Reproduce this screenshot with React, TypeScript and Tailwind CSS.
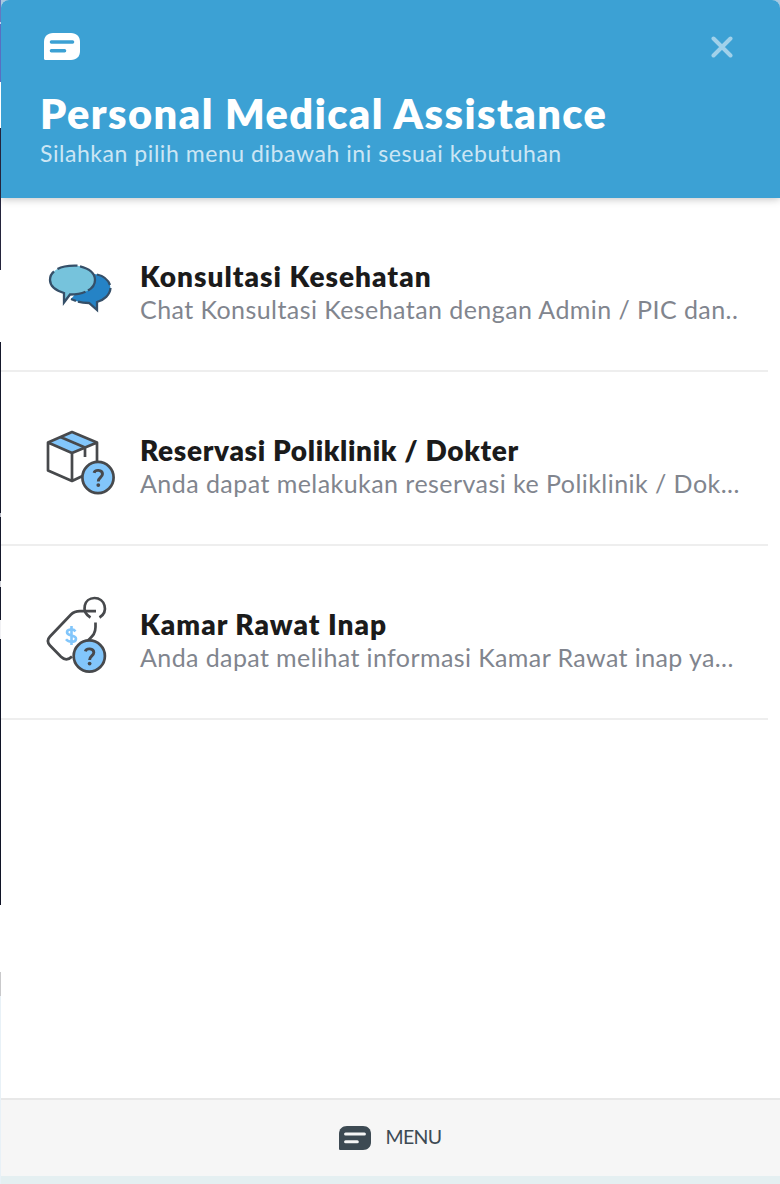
import type { ReactNode } from "react"

type MenuEntry = {
  title: string
  titleClass: string
  description: string
  descriptionClass: string
  icon: ReactNode
}

function MessageIcon({ className }: { className: string }) {
  return (
    <svg viewBox="0 0 36 27" className={className} fill="none" aria-hidden="true">
      <path
        d="M9 0H27C32.5 0 36 3.5 36 9V18C36 23.5 32.5 27 27 27H1.5C.6 27 0 26.4 0 25.5V9C0 3.5 3.5 0 9 0Z"
        fill="currentColor"
      />
      <path d="M7.4 9H28.6M7.4 17.8H20.6" className="stroke-(--line)" strokeWidth="3.4" strokeLinecap="round" />
    </svg>
  )
}

function QuestionMark({ cx, cy }: { cx: number; cy: number }) {
  return (
    <g transform={`translate(${cx} ${cy})`}>
      <circle r="15.6" fill="#82c6fb" stroke="#47494c" strokeWidth="2.7" />
      <path
        d="M-3.9-4.6C-3.2-8 4.5-8.2 4.5-3.4C4.5-.2.3.1.3 3.9"
        stroke="#47494c"
        strokeWidth="2.9"
        fill="none"
      />
      <circle cx=".3" cy="7.6" r="1.9" fill="#47494c" />
    </g>
  )
}

function ChatIcon() {
  return (
    <svg viewBox="30 250 110 80" className="mt-[52px] h-20 w-[110px]" fill="none" aria-hidden="true">
      <path
        d="M93 274C103 274 110.5 281 110.5 288.5C110.5 294 107 298.5 97 302V310L89 303C82 303 76 301.5 71 299Z"
        fill="#2583c6"
      />
      <path
        d="M97 274.5C103 275.8 108 279.5 110 285M110.5 288C110 295 104 300 97 302V310L89 303C84 303 80 302.3 78 301.7M76 301L71 299"
        stroke="#354f68"
        strokeWidth="2.3"
      />
      <path
        d="M72.5 265.5C85 265.5 95 271.5 95 280C95 288.5 85 294.5 70 294.5L64 302.5V293C56 290.5 50 286 50 280C50 271.5 60 265.5 72.5 265.5Z"
        fill="#76c3dc"
      />
      <path
        d="M80 266.3C89 268.3 95 273.3 95 280C95 284 92.5 288 88 290.5M85.5 291.7C81 293.7 76 294.5 70 294.5L64 302.5V293C56 290.5 50 286 50 280C50 276.5 51.5 273.5 54 271.5M57.5 269C61.5 266.7 67 265.3 77.5 265.7"
        stroke="#354f68"
        strokeWidth="2.3"
      />
    </svg>
  )
}

function PackageIcon() {
  return (
    <svg viewBox="30 420 110 90" className="mt-12 h-[90px] w-[110px]" fill="none" aria-hidden="true">
      <path d="M48 442.5L72 432L97 442.5L72 453Z" fill="#82c6fb" />
      <path
        d="M72 481L48 470.5V442.5L72 432L97 442.5V463M48 442.5L72 453L97 442.5M72 453V481L82.5 476M61 437.3L85 447.5V457"
        stroke="#47494c"
        strokeWidth="2.7"
        strokeLinejoin="round"
      />
      <QuestionMark cx={98} cy={477.5} />
    </svg>
  )
}

function PriceTagIcon() {
  return (
    <svg viewBox="30 585 110 100" className="mt-[39px] h-[100px] w-[110px]" fill="none" aria-hidden="true">
      <path
        d="M96 611.2H80C76 611.2 73.5 612 71 614.5L50 636.5C47.2 639.5 47.2 642.5 50 645.5L61 656.8C64.5 660.2 68.5 660 72 656.5M95.5 622.5V627C95.5 633 93.5 635 88 640.5"
        stroke="#47494c"
        strokeWidth="2.7"
      />
      <path d="M90.5 617.5C80.5 611.5 84 598 94.5 598C105 598 109 611.5 99.5 617.5" stroke="#47494c" strokeWidth="2.7" />
      <path
        d="M75.5 631.3C73 628.3 67 629 67 632.2C67 636.8 76 634 76 638.8C76 642.6 69 643 66 639.3M71.5 626V645"
        stroke="#82c6fb"
        strokeWidth="2.6"
      />
      <QuestionMark cx={89.3} cy={656} />
    </svg>
  )
}

const entries: MenuEntry[] = [
  {
    title: "Konsultasi Kesehatan",
    titleClass: "tracking-[1.02px]",
    description: "Chat Konsultasi Kesehatan dengan Admin / PIC dan..",
    descriptionClass: "tracking-[0.43px]",
    icon: <ChatIcon />,
  },
  {
    title: "Reservasi Poliklinik / Dokter",
    titleClass: "tracking-[0.65px]",
    description: "Anda dapat melakukan reservasi ke Poliklinik / Dok...",
    descriptionClass: "tracking-[0.45px]",
    icon: <PackageIcon />,
  },
  {
    title: "Kamar Rawat Inap",
    titleClass: "tracking-[1.02px]",
    description: "Anda dapat melihat informasi Kamar Rawat inap ya...",
    descriptionClass: "tracking-[0.4px]",
    icon: <PriceTagIcon />,
  },
]

// Sliver of the page that stays visible to the left of the widget
function PageEdge() {
  return (
    <div className="flex w-px shrink-0 flex-col bg-[#e8f1f7]">
      <div className="h-[22px] bg-[#6478c0]" />
      <div className="h-0.5 bg-[#c4cfed]" />
      <div className="h-[58px] bg-[#586fc2]" />
      <div className="h-[46px] bg-white" />
      <div className="h-[142px] bg-[#24243c]" />
      <div className="h-[72px] bg-white" />
      <div className="h-[171px] bg-[#15182b]" />
      <div className="h-1 bg-[#b8bac4]" />
      <div className="h-[64px] bg-[#15182b]" />
      <div className="h-[6px] bg-[#d5d6dc]" />
      <div className="h-[33px] bg-[#15182b]" />
      <div className="h-[19px] bg-[#f0f0f3]" />
      <div className="h-[266px] bg-[#101427]" />
      <div className="h-[67px] bg-white" />
      <div className="h-[24px] bg-[#c9c9cb]" />
    </div>
  )
}

export default function App() {
  return (
    <div className="flex h-[1184px] w-[780px] overflow-hidden bg-[#a9c8e0] font-[Lato,sans-serif]">
      <PageEdge />

      <div className="flex flex-1 flex-col overflow-hidden rounded-t-lg bg-white">
        <header className="relative h-[198px] shrink-0 bg-[#3ca1d4] pr-[47px] pl-[39px] text-white shadow-[0_1px_8px_rgba(0,0,0,0.25)]">
          <div className="flex items-start justify-between pt-[33px]">
            <MessageIcon className="ml-1 h-[27px] w-9 [--line:#3ca1d4]" />
            <button aria-label="Close" className="mt-[3px]">
              <svg viewBox="0 0 22 22" className="size-[22px]" fill="none" aria-hidden="true">
                <path d="M2.5 2.5L19.5 19.5M19.5 2.5L2.5 19.5" stroke="#a1d1ea" strokeWidth="4" strokeLinecap="round" />
              </svg>
            </button>
          </div>
          <h1 className="mt-7 text-[41.5px] leading-[50px] font-extrabold tracking-[1.45px] whitespace-nowrap">
            Personal Medical Assistance
          </h1>
          <p className="text-[23px] leading-[30px] tracking-[0.55px] whitespace-nowrap text-[#cce6f4]">
            Silahkan pilih menu dibawah ini sesuai kebutuhan
          </p>
        </header>

        <main className="flex-1">
          {entries.map((entry) => (
            <div key={entry.title} className="mr-3 flex h-[174px] items-start border-b-2 border-[#eeeeee]">
              <div className="ml-[29px] w-[110px] shrink-0">{entry.icon}</div>
              <div className="pt-[61px] whitespace-nowrap">
                <h2 className={`text-[28px] leading-[34px] font-extrabold text-[#1b1b1b] ${entry.titleClass}`}>{entry.title}</h2>
                <p className={`text-[25px] leading-[32px] text-[#81858e] ${entry.descriptionClass}`}>{entry.description}</p>
              </div>
            </div>
          ))}
        </main>

        <footer className="flex h-[78px] shrink-0 items-center justify-center gap-3.5 border-t-2 border-[#e8e8e8] bg-[#f6f6f6] text-[#3d4a53]">
          <MessageIcon className="h-6 w-8 [--line:#f6f6f6]" />
          <span className="-mt-0.5 text-[19.5px] leading-6 tracking-[-0.6px]">MENU</span>
        </footer>
        <div className="h-2 shrink-0 bg-[#e4eff1]" />
      </div>
    </div>
  )
}
